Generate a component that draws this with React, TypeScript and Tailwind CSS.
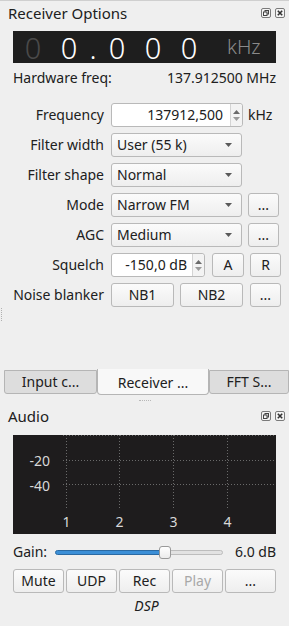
import React from "react";

const FONT = { fontFamily: '"Noto Sans", "Open Sans", sans-serif' };

function DockIcons() {
  return (
    <div className="flex items-center gap-[4px]">
      <svg width="10" height="10" viewBox="0 0 10 10">
        <rect x="0.5" y="0.5" width="9" height="9" rx="1.5" fill="#f4f4f4" stroke="#7a7a7a" />
        <rect x="4" y="2.5" width="3.5" height="3.5" fill="none" stroke="#444" />
        <rect x="2.5" y="4" width="3.5" height="3.5" fill="#f4f4f4" stroke="#444" />
      </svg>
      <svg width="10" height="10" viewBox="0 0 10 10">
        <rect x="0.5" y="0.5" width="9" height="9" rx="1.5" fill="#f4f4f4" stroke="#7a7a7a" />
        <path d="M2.8 2.8 L7.2 7.2 M7.2 2.8 L2.8 7.2" stroke="#333" strokeWidth="1.6" />
      </svg>
    </div>
  );
}

function Arrow() {
  return (
    <svg width="7" height="4" viewBox="0 0 7 4">
      <path d="M0 0 L7 0 L3.5 4 Z" fill="#5a5a5a" />
    </svg>
  );
}

function SpinArrows() {
  return (
    <div className="flex flex-col items-center justify-center gap-[3px] w-[12px] h-full border-l border-[#d4d4d4] bg-[#f3f3f3] rounded-r-[3px]">
      <svg width="7" height="4" viewBox="0 0 7 4">
        <path d="M0 4 L7 4 L3.5 0 Z" fill="#6a6a6a" />
      </svg>
      <svg width="7" height="4" viewBox="0 0 7 4">
        <path d="M0 0 L7 0 L3.5 4 Z" fill="#9a9a9a" />
      </svg>
    </div>
  );
}

function Combo({ text, w = "w-[131px]" }: { text: string; w?: string }) {
  return (
    <div
      className={`${w} h-[24px] flex items-center justify-between pl-[5px] pr-[9px] rounded-[3px] border border-[#b9b9b9] bg-gradient-to-b from-[#fbfbfb] to-[#eeeeee]`}
    >
      <span>{text}</span>
      <Arrow />
    </div>
  );
}

function Btn({
  children,
  w,
  disabled,
}: {
  children: React.ReactNode;
  w?: string;
  disabled?: boolean;
}) {
  return (
    <div
      className={`${w ?? ""} h-[24px] flex items-center justify-center rounded-[3px] border border-[#b9b9b9] bg-gradient-to-b from-[#fbfbfb] to-[#eeeeee] ${
        disabled ? "text-[#a8a8a8]" : ""
      }`}
    >
      {children}
    </div>
  );
}

function Row({ label, children }: { label: string; children: React.ReactNode }) {
  return (
    <div className="flex items-center h-[24px]">
      <div className="w-[105px] text-right pr-[1px]">{label}</div>
      <div className="ml-[6px] flex items-center gap-[6px]">{children}</div>
    </div>
  );
}

function Plot() {
  const vx = [53, 106, 160, 214, 267];
  return (
    <div className="mx-[13px] h-[99px] bg-[#1e1c1d] overflow-hidden">
      <svg width="266" height="99" viewBox="0 0 266 99" className="block">
        {[0.5, 25.5, 49.5].map((y) => (
          <line key={y} x1="50" y1={y} x2="266" y2={y} stroke="#6a6a6a" strokeWidth="1" strokeDasharray="1 2" />
        ))}
        {vx.map((x) => (
          <line key={x} x1={x + 0.5} y1="0" x2={x + 0.5} y2="73" stroke="#6a6a6a" strokeWidth="1" strokeDasharray="1 2" />
        ))}
        <text x="37" y="31" fill="#d8d8d8" fontSize="14" textAnchor="end" style={FONT}>
          -20
        </text>
        <text x="37" y="56" fill="#d8d8d8" fontSize="14" textAnchor="end" style={FONT}>
          -40
        </text>
        {["1", "2", "3", "4", "5"].map((t, i) => (
          <text key={t} x={vx[i] + 0.5} y="92" fill="#d8d8d8" fontSize="14" textAnchor="middle" style={FONT}>
            {t}
          </text>
        ))}
      </svg>
    </div>
  );
}

export default function App() {
  return (
    <div
      className="w-[289px] h-[626px] bg-[#efefef] text-[#202020] text-[14px] leading-none flex flex-col overflow-hidden border-t border-[#cfcfcf]"
      style={FONT}
    >
      {/* title */}
      <div className="h-[24px] flex items-center justify-between pl-[8px] pr-[4px] text-[15px]">
        <span>Receiver Options</span>
        <DockIcons />
      </div>

      {/* LCD */}
      <div className="mx-[13px] mt-[6px] h-[32px] bg-[#1e1e1e] flex items-center text-[29px] font-light">
        <div className="w-[2px]" />
        <div className="w-[36px] text-center text-[#4a4a4a]">0</div>
        <div className="w-[36px] text-center text-white">0</div>
        <div className="w-[12px] text-center text-white">.</div>
        <div className="w-[36px] text-center text-white">0</div>
        <div className="w-[36px] text-center text-white">0</div>
        <div className="w-[36px] text-center text-white">0</div>
        <div className="ml-[20px] text-[20px] text-[#8a8a8a]">kHz</div>
      </div>

      {/* hardware freq */}
      <div className="mx-[13px] mt-[8px] h-[14px] flex items-center justify-between">
        <span>Hardware freq:</span>
        <span>137.912500 MHz</span>
      </div>

      {/* form */}
      <div className="mt-[18px] flex flex-col gap-[6px]">
        <Row label="Frequency">
          <div className="w-[132px] h-[24px] flex items-center rounded-[3px] border border-[#b9b9b9] bg-white">
            <span className="flex-1 text-right pr-[7px]">137912,500</span>
            <SpinArrows />
          </div>
          <span className="-ml-[1px]">kHz</span>
        </Row>
        <Row label="Filter width">
          <Combo text="User (55 k)" />
        </Row>
        <Row label="Filter shape">
          <Combo text="Normal" />
        </Row>
        <Row label="Mode">
          <Combo text="Narrow FM" />
          <Btn w="w-[31px]">...</Btn>
        </Row>
        <Row label="AGC">
          <Combo text="Medium" />
          <Btn w="w-[31px]">...</Btn>
        </Row>
        <Row label="Squelch">
          <div className="w-[94px] h-[24px] flex items-center rounded-[3px] border border-[#b9b9b9] bg-white">
            <span className="flex-1 text-right pr-[5px]">-150,0 dB</span>
            <SpinArrows />
          </div>
          <Btn w="w-[32px] ml-[1px]">A</Btn>
          <Btn w="w-[31px]">R</Btn>
        </Row>
        <Row label="Noise blanker">
          <Btn w="w-[63px]">NB1</Btn>
          <Btn w="w-[63px]">NB2</Btn>
          <Btn w="w-[31px] ml-[1px]">...</Btn>
        </Row>
      </div>

      <div className="ml-[1px] mt-[1px] w-0 h-[13px] border-l border-dotted border-[#b0b0b0]" />

      {/* tabs */}
      <div className="mt-[49px] ml-[4px] flex items-start h-[26px]">
        <div className="w-[93px] h-[24px] flex items-center justify-center bg-[#dddddd] border border-[#b5b5b5] rounded-b-[3px]">
          Input c...
        </div>
        <div className="w-[112px] h-[26px] -mt-[1px] flex items-center justify-center pt-[2px] bg-[#f8f8f8] border-x border-b border-[#b5b5b5] rounded-b-[4px]">
          Receiver ...
        </div>
        <div className="w-[80px] h-[24px] flex items-center justify-center bg-[#dddddd] border border-[#b5b5b5] rounded-b-[3px]">
          FFT S...
        </div>
      </div>

      <div className="mt-[4px] mx-auto w-[12px] h-0 border-t border-dotted border-[#b8b8b8]" />

      {/* audio title */}
      <div className="mt-[3px] h-[24px] flex items-center justify-between pl-[8px] pr-[4px] text-[15px]">
        <span>Audio</span>
        <DockIcons />
      </div>

      <div className="mt-[7px]">
        <Plot />
      </div>

      {/* gain */}
      <div className="mx-[13px] mt-[10px] h-[16px] flex items-center">
        <span>Gain:</span>
        <div className="ml-[8px] w-[168px] h-[14px] flex items-center">
          <div className="w-[105px] h-[5px] rounded-l-[3px] bg-[#3b8fd7] border border-[#2a6aa3]" />
          <div className="w-[12px] h-[13px] -mx-[1px] rounded-[3px] bg-gradient-to-b from-white to-[#ececec] border border-[#9a9a9a] z-10" />
          <div className="flex-1 h-[5px] rounded-r-[3px] bg-[#e2e2e2] border border-[#bdbdbd]" />
        </div>
        <span className="ml-auto">6.0 dB</span>
      </div>

      {/* buttons */}
      <div className="mx-[13px] mt-[9px] grid grid-cols-5 gap-[2px]">
        <Btn>Mute</Btn>
        <Btn>UDP</Btn>
        <Btn>Rec</Btn>
        <Btn disabled>Play</Btn>
        <Btn>...</Btn>
      </div>

      <div className="mt-[6px] text-center italic pl-[4px]">DSP</div>
    </div>
  );
}
